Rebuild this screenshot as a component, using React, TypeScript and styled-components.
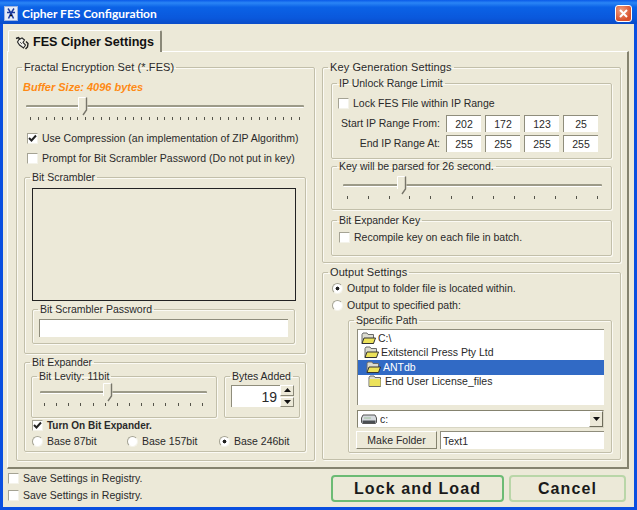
import styled, { createGlobalStyle } from "styled-components";

const GlobalStyle = createGlobalStyle`
  html, body {
    margin: 0;
    padding: 0;
    background: #ece9d8;
  }
  * {
    box-sizing: border-box;
  }
`;

const Window = styled.div`
  width: 637px;
  height: 510px;
  display: flex;
  flex-direction: column;
  background: #0a4fe0;
  padding: 0 3px 3px;
  font-family: "Liberation Sans", Arial, sans-serif;
  font-size: 10.5px;
  line-height: 13px;
  color: #2a2a2a;
  overflow: hidden;
`;

const TitleBar = styled.div`
  height: 24px;
  margin: 0 -3px;
  padding: 2px 5px 0 4px;
  display: flex;
  align-items: center;
  gap: 4px;
  background: linear-gradient(180deg, #0a5ae8 0%, #2a85f5 12%, #0b62e6 30%, #0a58dc 75%, #0a4cc8 100%);
`;

const TitleText = styled.div`
  flex: 1;
  color: #fff;
  font-family: Lato, "Liberation Sans", sans-serif;
  font-size: 12px;
  font-weight: bold;
`;

const CloseButton = styled.div`
  width: 17px;
  height: 17px;
  border: 1px solid #fff;
  border-radius: 3px;
  background: radial-gradient(circle at 35% 30%, #f0a080, #d8512c 70%);
  display: flex;
  align-items: center;
  justify-content: center;
`;

const Body = styled.div`
  flex: 1;
  display: flex;
  flex-direction: column;
  background: #ece9d8;
  padding: 6px 5px 0 4px;
`;

const TabRow = styled.div`
  display: flex;
  padding-left: 1px;
  position: relative;
  z-index: 1;
  margin-bottom: -1px;
`;

const Tab = styled.div`
  width: 154px;
  height: 22px;
  padding: 2px 0 0 6px;
  display: flex;
  align-items: center;
  gap: 4px;
  background: #ece9d8;
  border-top: 1px solid #fff;
  border-left: 1px solid #fff;
  border-right: 2px solid #8a8878;
  border-radius: 2px 2px 0 0;
  font-size: 12.6px;
  font-weight: bold;
  color: #111;
  white-space: nowrap;
`;

const Pane = styled.div`
  height: 418px;
  padding: 9px 0 0 8px;
  border-top: 1px solid #fff;
  border-left: 1px solid #fff;
  border-right: 2px solid #85836f;
  border-bottom: 2px solid #85836f;
  display: grid;
  grid-template-columns: 299px 299px;
  column-gap: 7px;
  align-content: start;
`;

const Column = styled.div`
  display: flex;
  flex-direction: column;
`;

// --pl is the left padding, the legend takes it back so its text stays near the corner
const Group = styled.fieldset<{ $h: number; $w?: number }>`
  --pl: 0px;
  margin: 0;
  padding: 0 0 0 var(--pl);
  min-width: 0;
  height: ${(p) => p.$h}px;
  width: ${(p) => (p.$w ? `${p.$w}px` : "auto")};
  border: 1px solid #c2bfaa;
  border-radius: 2px;
  box-shadow: 1px 1px 0 #fbfaf4, inset 1px 1px 0 #fbfaf4;
  display: flex;
  flex-direction: column;

  > legend {
    margin-left: calc(5px - var(--pl));
    padding: 0 2px;
    line-height: 13px;
    white-space: nowrap;
  }
`;

const BigLegend = styled.legend`
  && {
    font-size: 11px;
    letter-spacing: 0.1px;
  }
`;

const FractalGroup = styled(Group)`
  --pl: 6px;
  padding-top: 7px;
`;

const BufferText = styled.div`
  color: #ff8a14;
  font-weight: bold;
  font-style: italic;
  font-size: 11px;
`;

const SliderBox = styled.div<{ $left: number; $width: number; $top: number }>`
  position: relative;
  width: ${(p) => p.$width}px;
  height: 26px;
  margin: ${(p) => p.$top}px 0 0 ${(p) => p.$left}px;
`;

const SliderTrack = styled.div`
  height: 3px;
  margin-top: 8px;
  background: #9c9a88;
  border-bottom: 1px solid #fff;
  border-radius: 1px;
`;

const SliderTicks = styled.div`
  display: flex;
  justify-content: space-between;
  margin: 9px 4px 0;
`;

const SliderTick = styled.span`
  width: 1px;
  height: 3px;
  background: #55544a;
`;

const SliderThumb = styled.svg`
  position: absolute;
  top: 0;
`;

const CheckRow = styled.label<{ $top?: number; $left?: number; $bold?: boolean }>`
  display: flex;
  align-items: center;
  height: 14px;
  gap: 4px;
  margin-top: ${(p) => p.$top ?? 0}px;
  margin-left: ${(p) => p.$left ?? 0}px;
  font-weight: ${(p) => (p.$bold ? "bold" : "normal")};
  font-size: ${(p) => (p.$bold ? "10px" : "inherit")};
  white-space: nowrap;
`;

const CheckBox = styled.span`
  width: 11px;
  height: 11px;
  flex: none;
  background: #fff;
  border-top: 1px solid #a5a394;
  border-left: 1px solid #a5a394;
  border-right: 1px solid #f4f3ea;
  border-bottom: 1px solid #f4f3ea;
  display: flex;
  align-items: center;
  justify-content: center;
`;

const RadioDot = styled.span<{ $on?: boolean }>`
  width: 11px;
  height: 11px;
  flex: none;
  border-radius: 50%;
  background: ${(p) =>
    p.$on
      ? "radial-gradient(circle, #222 0 1.7px, #fff 2.2px)"
      : "#fff"};
  border: 1px solid;
  border-color: #a5a394 #f4f3ea #f4f3ea #a5a394;
`;

const ScramblerGroup = styled(Group)`
  --pl: 7px;
  margin: 6px 0 0 1px;
  padding-top: 4px;
`;

const ScrambleBox = styled.div`
  width: 264px;
  height: 113px;
  border: 1px solid #222;
`;

const PasswordGroup = styled(Group)`
  --pl: 6px;
  margin-top: 2px;
  padding-top: 3px;
`;

const Field = styled.input`
  display: block;
  border: none;
  border-top: 1px solid #8f8d7c;
  border-left: 1px solid #8f8d7c;
  background: #fff;
  padding: 0 2px;
  margin: 0;
  font: inherit;
  color: #2a2a2a;
  outline: none;
`;

const PasswordField = styled(Field)`
  width: 249px;
  height: 18px;
`;

const ExpanderGroup = styled(Group)`
  --pl: 6px;
  margin: 2px 0 0 1px;
  padding-top: 1px;
`;

const ExpanderTop = styled.div`
  display: flex;
  gap: 7px;
`;

const LevityGroup = styled(Group)`
  --pl: 8px;
`;

const BytesGroup = styled(Group)`
  --pl: 6px;
  padding-top: 2px;
  flex-direction: row;
`;

const SpinField = styled(Field)`
  width: 49px;
  height: 22px;
  text-align: right;
  font-size: 14px;
  padding-right: 3px;
`;

const SpinButtons = styled.div`
  width: 14px;
  height: 22px;
  display: flex;
  flex-direction: column;
  gap: 1px;
`;

const SpinButton = styled.div`
  flex: 1;
  background: #ece9d8;
  border: 1px solid;
  border-color: #fff #8a8878 #8a8878 #fff;
  display: flex;
  align-items: center;
  justify-content: center;
`;

const RadioRow = styled.div`
  display: grid;
  grid-template-columns: 95px 92px auto;
  margin: 2px 0 0 1px;
`;

const KeyGroup = styled(Group)`
  --pl: 8px;
  padding-top: 3px;
`;

const IpGroup = styled(Group)`
  --pl: 6px;
  padding-top: 6px;
`;

const IpGrid = styled.div`
  display: grid;
  grid-template-columns: 104px repeat(4, 35px);
  column-gap: 4px;
  row-gap: 3px;
  margin-top: 5px;
`;

const IpLabel = styled.div`
  text-align: right;
  padding-right: 2px;
  line-height: 16px;
  white-space: nowrap;
`;

const IpField = styled(Field)`
  width: 35px;
  height: 17px;
  text-align: center;
`;

const ParseGroup = styled(Group)`
  --pl: 11px;
  margin-top: 1px;
  padding-top: 3px;
`;

const ExpanderKeyGroup = styled(Group)`
  --pl: 7px;
  margin-top: 4px;
  padding-top: 2px;
`;

const OutputGroup = styled(Group)`
  --pl: 9px;
  margin-top: 3px;
  padding-top: 2px;
`;

const PathGroup = styled(Group)`
  --pl: 8px;
  margin: 2px 0 0 16px;
  padding-top: 2px;
`;

const TreeBox = styled.div`
  width: 247px;
  height: 76px;
  background: #fff;
  border-top: 1px solid #8f8d7c;
  border-left: 1px solid #8f8d7c;
  padding-top: 1px;
`;

const TreeRow = styled.div<{ $indent: number; $selected?: boolean }>`
  height: 14.5px;
  display: flex;
  align-items: center;
  gap: 2px;
  padding-left: ${(p) => p.$indent}px;
  background: ${(p) => (p.$selected ? "#316ac5" : "transparent")};
  color: ${(p) => (p.$selected ? "#fff" : "#2a2a2a")};
`;

const ComboBox = styled.div`
  width: 247px;
  height: 18px;
  margin-top: 5px;
  background: #fff;
  border: 1px solid;
  border-color: #85836f #d8d6c4 #d8d6c4 #85836f;
  display: flex;
  align-items: center;
  gap: 3px;
  padding-left: 3px;
`;

const ComboText = styled.span`
  flex: 1;
`;

const ComboArrow = styled.div`
  width: 14px;
  height: 16px;
  background: #ece9d8;
  border: 1px solid;
  border-color: #fff #6f6d5c #6f6d5c #fff;
  display: flex;
  align-items: center;
  justify-content: center;
`;

const FolderRow = styled.div`
  display: flex;
  gap: 3px;
  margin-top: 3px;
  margin-left: -1px;
`;

const MakeFolder = styled.button`
  width: 81px;
  height: 18px;
  padding: 0;
  font: inherit;
  color: #2a2a2a;
  background: #ece9d8;
  border: 1px solid;
  border-color: #fff #85836f #85836f #fff;
`;

const FolderField = styled(Field)`
  width: 164px;
  height: 18px;
`;

const Footer = styled.div`
  flex: 1;
  display: flex;
  justify-content: space-between;
`;

const FooterChecks = styled.div`
  padding: 2px 0 0 1px;
  display: flex;
  flex-direction: column;
  gap: 3px;
`;

const FooterButtons = styled.div`
  display: flex;
  gap: 5px;
  padding-top: 6px;
  padding-right: 3px;
`;

const BigButton = styled.button<{ $primary?: boolean }>`
  width: ${(p) => (p.$primary ? 173 : 117)}px;
  height: 27px;
  padding: 0;
  background: #ece9d8;
  border: 2px solid ${(p) => (p.$primary ? "#6cbb74" : "#b9d6a8")};
  border-radius: 4px;
  font-family: "Liberation Sans", Arial, sans-serif;
  font-size: 16px;
  font-weight: bold;
  letter-spacing: 1.1px;
  color: #1a1a1a;
`;

const Check = () => (
  <svg width="9" height="9" viewBox="0 0 9 9">
    <path d="M1 4l2.5 2.5L8 1.5" fill="none" stroke="#222" strokeWidth="2" />
  </svg>
);

const Slider = ({ left, top, width, thumb, ticks }: { left: number; top: number; width: number; thumb: number; ticks: number }) => (
  <SliderBox $left={left} $top={top} $width={width}>
    <SliderTrack />
    <SliderTicks>
      {Array.from({ length: ticks }).map((_, i) => (
        <SliderTick key={i} />
      ))}
    </SliderTicks>
    <SliderThumb width="10" height="19" viewBox="0 0 10 19" style={{ left: thumb }}>
      <path d="M0.5 0.5H9.5V13L5 18.5L0.5 13Z" fill="#ece9d8" />
      <path d="M0.5 13V0.5H8" fill="none" stroke="#fff" />
      <path d="M8.5 0.5V13L5 18" fill="none" stroke="#77756a" strokeWidth="1.4" />
    </SliderThumb>
  </SliderBox>
);

const Folder = ({ open = true }: { open?: boolean }) => (
  <svg width="15" height="13" viewBox="0 0 15 13" style={{ flex: "none" }}>
    <path d="M1 2.5L2 1H6L7 2.5H12.5V11.5H1Z" fill="#dcdcd0" stroke="#6a6a6a" />
    {open ? (
      <path d="M3 6H14.5L12.5 11.5H1Z" fill="#ece25a" stroke="#333" />
    ) : (
      <rect x="1.5" y="4" width="11" height="7" fill="#ece25a" />
    )}
  </svg>
);

const Drive = () => (
  <svg width="16" height="10" viewBox="0 0 16 10">
    <path d="M2 1H14L15.5 4V8.5L14.5 9.5H1.5L0.5 8.5V4Z" fill="#d5d9de" stroke="#555" />
    <path d="M1.5 6.5H14.5V9H1.5Z" fill="#4a4e52" />
    <path d="M3 4H10" stroke="#9fc29c" />
  </svg>
);

const TitleIcon = () => (
  <svg width="14" height="15" viewBox="0 0 14 15" style={{ flex: "none" }}>
    <rect x="0.5" y="0.5" width="13" height="14" fill="#e6ecf8" stroke="#9db3e0" />
    <path d="M4 2.5L7 7L4.5 12.5M10 2.5L7 7L9.5 12.5M3 6.5H11" stroke="#1b3a9e" strokeWidth="1.5" fill="none" />
    <path d="M6 9.5H8" stroke="#111" strokeWidth="1.5" />
  </svg>
);

const TabIcon = () => (
  <svg width="14" height="14" viewBox="0 0 14 14" style={{ flex: "none" }}>
    <path d="M4 3.5L7 2L9.5 4L8 6.5L10.5 9L8.5 12L4.5 9L2.5 6Z" fill="#f4f4ee" stroke="#2a2a2a" strokeWidth="1.1" />
    <path d="M1 2.5L3.5 1.5L5 3.5M11 5.5L13 7.5L12.5 11L10.5 13" fill="none" stroke="#222" strokeWidth="1.4" />
    <path d="M5 6L7 8" stroke="#666" />
  </svg>
);

const Arrow = ({ up }: { up?: boolean }) => (
  <svg width="7" height="4" viewBox="0 0 7 4">
    <path d={up ? "M3.5 0L7 4H0Z" : "M0 0H7L3.5 4Z"} fill="#111" />
  </svg>
);

const ipStart = ["202", "172", "123", "25"];
const ipEnd = ["255", "255", "255", "255"];

const treeRows = [
  { name: "C:\\", indent: 3 },
  { name: "Exitstencil Press Pty Ltd", indent: 6 },
  { name: "ANTdb", indent: 8, selected: true },
  { name: "End User License_files", indent: 10, closed: true },
];

export default function App() {
  return (
    <>
      <GlobalStyle />
      <Window>
        <TitleBar>
          <TitleIcon />
          <TitleText>Cipher FES Configuration</TitleText>
          <CloseButton>
            <svg width="9" height="9" viewBox="0 0 9 9">
              <path d="M1 1L8 8M8 1L1 8" stroke="#fff" strokeWidth="2" />
            </svg>
          </CloseButton>
        </TitleBar>
        <Body>
          <TabRow>
            <Tab>
              <TabIcon />
              FES Cipher Settings
            </Tab>
          </TabRow>
          <Pane>
            <Column>
              <FractalGroup $h={400}>
                <BigLegend>Fractal Encryption Set (*.FES)</BigLegend>
                <BufferText>Buffer Size: 4096 bytes</BufferText>
                <Slider left={3} top={3} width={278} thumb={52} ticks={35} />
                <CheckRow $top={8} $left={4}>
                  <CheckBox><Check /></CheckBox>
                  Use Compression (an implementation of ZIP Algorithm)
                </CheckRow>
                <CheckRow $top={6} $left={4}>
                  <CheckBox />
                  Prompt for Bit Scrambler Password (Do not put in key)
                </CheckRow>
                <ScramblerGroup $h={183} $w={282}>
                  <legend>Bit Scrambler</legend>
                  <ScrambleBox />
                  <PasswordGroup $h={41} $w={263}>
                    <legend>Bit Scrambler Password</legend>
                    <PasswordField readOnly />
                  </PasswordGroup>
                </ScramblerGroup>
                <ExpanderGroup $h={96} $w={282}>
                  <legend>Bit Expander</legend>
                  <ExpanderTop>
                    <LevityGroup $h={48} $w={186}>
                      <legend>Bit Levity: 11bit</legend>
                      <Slider left={0} top={0} width={167} thumb={63} ticks={14} />
                    </LevityGroup>
                    <BytesGroup $h={48} $w={76}>
                      <legend>Bytes Added</legend>
                      <SpinField readOnly value="19" />
                      <SpinButtons>
                        <SpinButton><Arrow up /></SpinButton>
                        <SpinButton><Arrow /></SpinButton>
                      </SpinButtons>
                    </BytesGroup>
                  </ExpanderTop>
                  <CheckRow $top={0} $left={1} $bold>
                    <CheckBox><Check /></CheckBox>
                    Turn On Bit Expander.
                  </CheckRow>
                  <RadioRow>
                    <CheckRow><RadioDot />Base 87bit</CheckRow>
                    <CheckRow><RadioDot />Base 157bit</CheckRow>
                    <CheckRow><RadioDot $on />Base 246bit</CheckRow>
                  </RadioRow>
                </ExpanderGroup>
              </FractalGroup>
            </Column>
            <Column>
              <KeyGroup $h={202}>
                <BigLegend>Key Generation Settings</BigLegend>
                <IpGroup $h={82} $w={281}>
                  <legend>IP Unlock Range Limit</legend>
                  <CheckRow>
                    <CheckBox />
                    Lock FES File within IP Range
                  </CheckRow>
                  <IpGrid>
                    <IpLabel>Start IP Range From:</IpLabel>
                    {ipStart.map((v, i) => (
                      <IpField key={i} readOnly value={v} />
                    ))}
                    <IpLabel>End IP Range At:</IpLabel>
                    {ipEnd.map((v, i) => (
                      <IpField key={i} readOnly value={v} />
                    ))}
                  </IpGrid>
                </IpGroup>
                <ParseGroup $h={50} $w={281}>
                  <legend>Key will be parsed for 26 second.</legend>
                  <Slider left={0} top={0} width={259} thumb={54} ticks={13} />
                </ParseGroup>
                <ExpanderKeyGroup $h={42} $w={281}>
                  <legend>Bit Expander Key</legend>
                  <CheckRow $top={1}>
                    <CheckBox />
                    Recompile key on each file in batch.
                  </CheckRow>
                </ExpanderKeyGroup>
              </KeyGroup>
              <OutputGroup $h={194}>
                <BigLegend>Output Settings</BigLegend>
                <CheckRow><RadioDot $on />Output to folder file is located within.</CheckRow>
                <CheckRow $top={3}><RadioDot />Output to specified path:</CheckRow>
                <PathGroup $h={139} $w={264}>
                  <legend>Specific Path</legend>
                  <TreeBox>
                    {treeRows.map((row) => (
                      <TreeRow key={row.name} $indent={row.indent} $selected={row.selected}>
                        <Folder open={!row.closed} />
                        {row.name}
                      </TreeRow>
                    ))}
                  </TreeBox>
                  <ComboBox>
                    <Drive />
                    <ComboText>c:</ComboText>
                    <ComboArrow><Arrow /></ComboArrow>
                  </ComboBox>
                  <FolderRow>
                    <MakeFolder>Make Folder</MakeFolder>
                    <FolderField readOnly value="Text1" />
                  </FolderRow>
                </PathGroup>
              </OutputGroup>
            </Column>
          </Pane>
          <Footer>
            <FooterChecks>
              <CheckRow><CheckBox />Save Settings in Registry.</CheckRow>
              <CheckRow><CheckBox />Save Settings in Registry.</CheckRow>
            </FooterChecks>
            <FooterButtons>
              <BigButton $primary>Lock and Load</BigButton>
              <BigButton>Cancel</BigButton>
            </FooterButtons>
          </Footer>
        </Body>
      </Window>
    </>
  );
}
